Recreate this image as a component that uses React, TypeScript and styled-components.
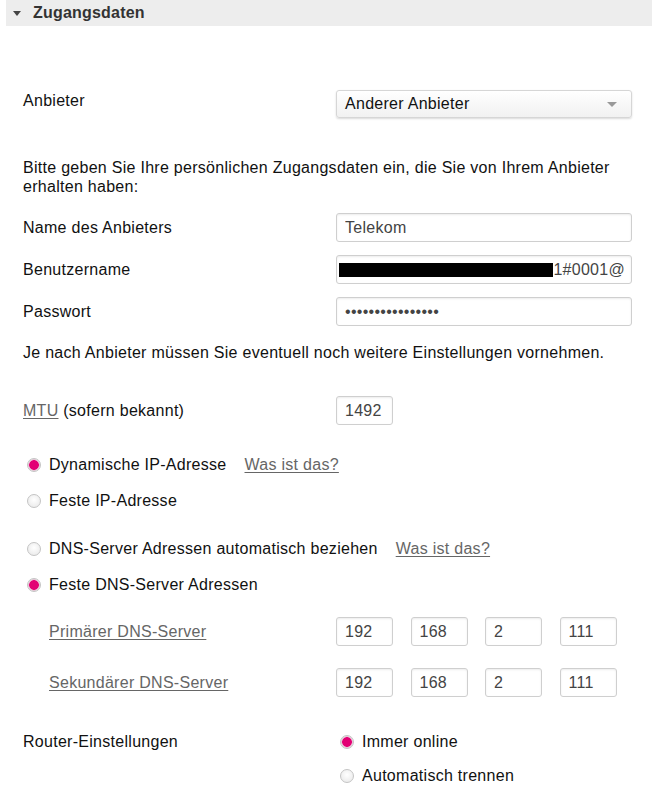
import styled, { createGlobalStyle, css } from "styled-components";

const GlobalStyle = createGlobalStyle`
  body {
    margin: 0;
    background: #fff;
    font-family: "Liberation Sans", Arial, sans-serif;
    font-size: 16px;
    letter-spacing: 0.28px;
    color: #111;
  }
`;

const Page = styled.div`
  width: 652px;
  padding-bottom: 14px;
`;

const SectionHeader = styled.div`
  margin-left: 6px;
  height: 26px;
  background: #ededed;
  display: flex;
  align-items: center;
  gap: 8px;
  padding-left: 7px;
  font-size: 16px;
  font-weight: bold;
  letter-spacing: 0.2px;
  color: #333;
`;

const Caret = styled.span`
  width: 0;
  height: 0;
  border-left: 4px solid transparent;
  border-right: 4px solid transparent;
  border-top: 5px solid #444;
  margin-top: 1px;
  margin-right: 4px;
`;

const Body = styled.div`
  padding-left: 23px;
  padding-right: 20px;
  display: flex;
  flex-direction: column;
`;

const Row = styled.div<{ $top: number; $align?: string }>`
  display: flex;
  align-items: ${(p) => p.$align ?? "center"};
  margin-top: ${(p) => p.$top}px;
`;

const Label = styled.div<{ $padTop?: number }>`
  width: 313px;
  flex-shrink: 0;
  line-height: 19px;
  padding-top: ${(p) => p.$padTop ?? 0}px;
`;

const SubLabel = styled(Label)`
  width: 287px;
  padding-left: 26px;
`;

const Text = styled.p<{ $top: number }>`
  margin: ${(p) => p.$top}px 0 0;
  line-height: 19px;
`;

const Link = styled.a`
  color: #666;
  text-decoration: underline;
  text-underline-offset: 2px;
  cursor: pointer;
`;

const fieldBase = css`
  box-sizing: border-box;
  height: 29px;
  border: 1px solid #cfcfcf;
  border-radius: 3px;
  box-shadow: inset 0 1px 2px rgba(0, 0, 0, 0.08);
  background: #fff;
  font-family: "Liberation Sans", Arial, sans-serif;
  font-size: 16px;
  letter-spacing: 0.28px;
  color: #444;
`;

const Input = styled.input<{ $w?: number }>`
  ${fieldBase};
  width: ${(p) => p.$w ?? 296}px;
  padding: 0 8px;
  outline: none;
`;

const MaskedField = styled.div`
  ${fieldBase};
  width: 296px;
  display: flex;
  align-items: center;
  justify-content: flex-end;
  overflow: hidden;
  padding-right: 6px;
  white-space: nowrap;
`;

const Blackout = styled.span`
  display: inline-block;
  width: 214px;
  height: 14px;
  background: #000;
  flex-shrink: 0;
`;

const Select = styled.div`
  box-sizing: border-box;
  width: 297px;
  height: 28px;
  border: 1px solid #d6d6d6;
  border-radius: 3px;
  background: linear-gradient(#ffffff, #f1f1f1);
  box-shadow: 0 1px 2px rgba(0, 0, 0, 0.15);
  display: flex;
  align-items: center;
  justify-content: space-between;
  padding: 0 14px 0 8px;
  color: #111;
`;

const SelectArrow = styled.span`
  width: 0;
  height: 0;
  border-left: 5px solid transparent;
  border-right: 5px solid transparent;
  border-top: 5px solid #999;
`;

const IpGroup = styled.div`
  display: flex;
  gap: 17.5px;
`;

const RadioLine = styled.label<{ $top: number }>`
  display: flex;
  align-items: center;
  margin-top: ${(p) => p.$top}px;
  line-height: 20px;
  margin-left: 4px;
`;

const RadioDot = styled.span<{ $checked?: boolean }>`
  box-sizing: border-box;
  width: 14px;
  height: 14px;
  border-radius: 50%;
  margin-right: 8px;
  flex-shrink: 0;
  border: 1px solid #c4c4c4;
  ${(p) =>
    p.$checked
      ? css`
          background: radial-gradient(circle, #e20074 0 4.5px, #f0a0c8 5px, #e6e6e6 6px);
        `
      : css`
          background: radial-gradient(circle at 50% 40%, #ffffff, #e6e6e6);
        `}
`;

const Help = styled(Link)`
  margin-left: 18px;
`;

const RadioColumn = styled.div`
  display: flex;
  flex-direction: column;
`;

function Radio({ checked, label, top = 0, help }: { checked?: boolean; label: string; top?: number; help?: string }) {
  return (
    <RadioLine $top={top}>
      <RadioDot $checked={checked} />
      {label}
      {help && <Help>{help}</Help>}
    </RadioLine>
  );
}

function IpFields({ top, label }: { top: number; label: string }) {
  return (
    <Row $top={top}>
      <SubLabel>
        <Link>{label}</Link>
      </SubLabel>
      <IpGroup>
        <Input $w={57} defaultValue="192" />
        <Input $w={57} defaultValue="168" />
        <Input $w={57} defaultValue="2" />
        <Input $w={57} defaultValue="111" />
      </IpGroup>
    </Row>
  );
}

export default function App() {
  return (
    <Page>
      <GlobalStyle />
      <SectionHeader>
        <Caret />
        Zugangsdaten
      </SectionHeader>
      <Body>
        <Row $top={64} $align="flex-start">
          <Label $padTop={1}>Anbieter</Label>
          <Select>
            Anderer Anbieter
            <SelectArrow />
          </Select>
        </Row>
        <Text $top={40}>
          Bitte geben Sie Ihre persönlichen Zugangsdaten ein, die Sie von Ihrem Anbieter erhalten haben:
        </Text>
        <Row $top={17}>
          <Label>Name des Anbieters</Label>
          <Input defaultValue="Telekom" />
        </Row>
        <Row $top={13}>
          <Label>Benutzername</Label>
          <MaskedField>
            <Blackout />
            1#0001@
          </MaskedField>
        </Row>
        <Row $top={13}>
          <Label>Passwort</Label>
          <Input type="password" defaultValue="xxxxxxxxxxxxxxxx" />
        </Row>
        <Text $top={17}>Je nach Anbieter müssen Sie eventuell noch weitere Einstellungen vornehmen.</Text>
        <Row $top={34}>
          <Label>
            <Link>MTU</Link> (sofern bekannt)
          </Label>
          <Input $w={57} defaultValue="1492" />
        </Row>
        <Radio top={30} checked label="Dynamische IP-Adresse" help="Was ist das?" />
        <Radio top={16} label="Feste IP-Adresse" />
        <Radio top={28} label="DNS-Server Adressen automatisch beziehen" help="Was ist das?" />
        <Radio top={16} checked label="Feste DNS-Server Adressen" />
        <IpFields top={22} label="Primärer DNS-Server" />
        <IpFields top={22} label="Sekundärer DNS-Server" />
        <Row $top={35} $align="flex-start">
          <Label>Router-Einstellungen</Label>
          <RadioColumn>
            <Radio checked label="Immer online" />
            <Radio top={14} label="Automatisch trennen" />
          </RadioColumn>
        </Row>
      </Body>
    </Page>
  );
}
